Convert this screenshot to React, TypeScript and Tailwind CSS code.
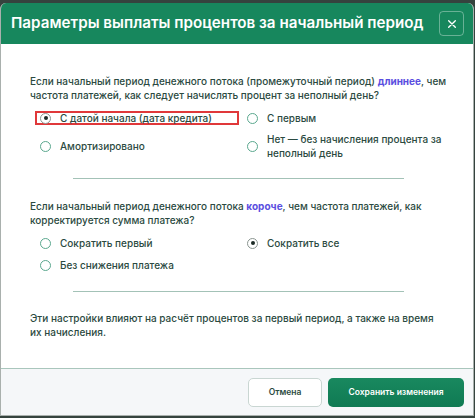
import React from 'react';

type Option = { label: React.ReactNode; checked?: boolean; highlight?: boolean };

const Radio: React.FC<{ checked?: boolean }> = ({ checked }) =>
  checked ? (
    <span className="flex h-[11px] w-[11px] shrink-0 items-center justify-center rounded-full border border-[#8a9590] bg-white">
      <span className="h-[4px] w-[4px] rounded-full bg-[#1c2a25]" />
    </span>
  ) : (
    <span className="h-[11px] w-[11px] shrink-0 rounded-full border-[1.5px] border-[#5aa88e] bg-white" />
  );

const OptionItem: React.FC<Option> = ({ label, checked, highlight }) => (
  <div
    className={
      highlight
        ? 'ml-[5px] flex h-[14px] w-[204px] items-center gap-[9px] border-2 border-[#e0383a] pl-[3px]'
        : 'ml-[10px] flex items-center gap-[9px]'
    }
  >
    <Radio checked={checked} />
    <span className="leading-[14px]">{label}</span>
  </div>
);

export default function App() {
  return (
    <div
      className="h-[418px] w-[475px] overflow-hidden bg-[#35433e] pt-[3px]"
      style={{ fontFamily: 'Inter, "Noto Sans", sans-serif' }}
    >
      <div className="flex h-[413px] w-[474px] flex-col overflow-hidden rounded-t-[6px] border-x border-b border-[#a9b0ad] bg-white">
        {/* header */}
        <div className="flex h-[41px] shrink-0 items-center justify-between bg-[#17875d] pr-[9px] pl-[10px]">
          <h1 className="text-[15.2px] font-semibold whitespace-nowrap text-white">
            Параметры выплаты процентов за начальный период
          </h1>
          <button className="flex h-[25px] w-[25px] items-center justify-center rounded-[4px] border border-white/35 text-white">
            <svg className="h-[10px] w-[10px]" viewBox="0 0 12 12" fill="none" stroke="currentColor" strokeWidth={1.6} strokeLinecap="round">
              <path d="M2 2l8 8M10 2l-8 8" />
            </svg>
          </button>
        </div>

        {/* body */}
        <div className="flex-1 pt-[30px] pl-[29px] text-[10px] font-medium whitespace-nowrap text-[#2b4a41]">
          <p className="leading-[14px]">
            Если начальный период денежного потока (промежуточный период){' '}
            <span className="font-bold text-[#5a4ee0]">длиннее</span>, чем
            <br />
            частота платежей, как следует начислять процент за неполный день?
          </p>
          <div className="mt-[9px] grid grid-cols-[207px_1fr] gap-y-[7px]">
            <OptionItem label="С датой начала (дата кредита)" checked highlight />
            <OptionItem label="С первым" />
            <OptionItem label="Амортизировано" />
            <OptionItem
              label={
                <>
                  Нет — без начисления процента за
                  <br />
                  неполный день
                </>
              }
            />
          </div>

          <div className="mt-[18px] ml-[43px] h-px w-[331px] bg-[#a3c2b7]" />

          <p className="mt-[20px] leading-[14px]">
            Если начальный период денежного потока{' '}
            <span className="font-bold text-[#5a4ee0]">короче</span>, чем частота платежей, как
            <br />
            корректируется сумма платежа?
          </p>
          <div className="mt-[9px] grid grid-cols-[207px_1fr] gap-y-[8px]">
            <OptionItem label="Сократить первый" />
            <OptionItem label="Сократить все" checked />
            <OptionItem label="Без снижения платежа" />
          </div>

          <div className="mt-[19px] ml-[43px] h-px w-[331px] bg-[#a3c2b7]" />

          <p className="mt-[19px] leading-[14px]">
            Эти настройки влияют на расчёт процентов за первый период, а также на время
            <br />
            их начисления.
          </p>
        </div>

        {/* footer */}
        <div className="flex h-[47px] shrink-0 items-center justify-end gap-[6px] border-t border-[#a9c6bc] bg-[#f5f7f9] pr-[9px]">
          <button className="h-[29px] w-[74px] rounded-[5px] border border-[#c9d6d2] bg-white text-[8.5px] font-semibold text-[#2b4a41]">
            Отмена
          </button>
          <button className="h-[29px] w-[136px] rounded-[5px] bg-gradient-to-b from-[#19895f] to-[#0f7a53] text-[8.5px] font-semibold text-white">
            Сохранить изменения
          </button>
        </div>
      </div>
    </div>
  );
}
